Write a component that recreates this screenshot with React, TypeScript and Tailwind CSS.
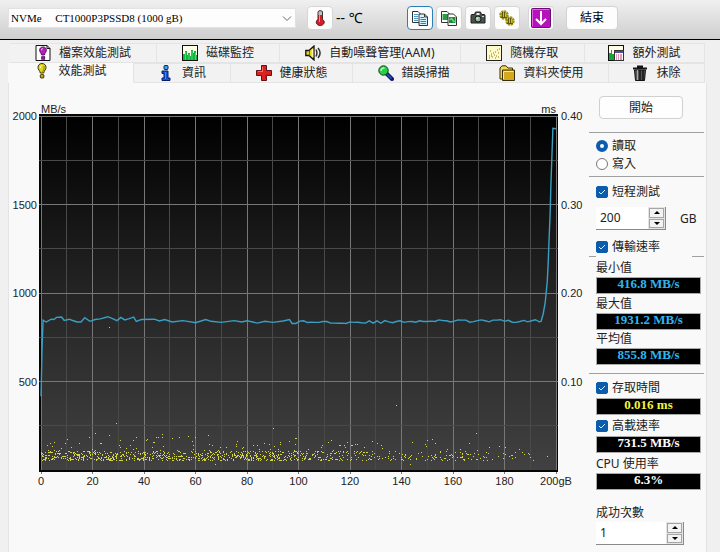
import { useState, type ReactNode } from 'react';

type TabItem = {
  label: string;
  icon: ReactNode;
  size: string;
};

type Point = [number, number];

function Icon({ children }: { children: ReactNode }) {
  return (
    <svg viewBox="0 0 16 16" className="h-4 w-4 shrink-0" aria-hidden="true">
      {children}
    </svg>
  );
}

const bulbShape = 'M8 .5C5.300 .5 4 2.300 4 4.500C4 6.500 5.800 7.500 6.300 10H9.700C10.200 7.500 12 6.500 12 4.500C12 2.300 10.700 .5 8 .5Z';

const icons = {
  fileBench: (
    <Icon>
      <path d="M1 .5H12L15 3.500V15.500H1Z" fill="#fff" stroke="#111" />
      <path d="M12 .5V3.500H15" fill="none" stroke="#111" />
      <g transform="translate(1.200 1.500) scale(.85)">
        <path d={bulbShape} fill="#b51bbd" stroke="#4d0752" />
        <path d="M6.500 4.500V3L7.500 2" fill="none" stroke="#fff" />
        <rect x="6.500" y="12" width="3.500" height="3" fill="#a316ad" stroke="#4d0752" />
      </g>
    </Icon>
  ),
  monitor: (
    <Icon>
      <rect x=".5" y=".5" width="15" height="15" fill="#fffee8" stroke="#111" />
      <path d="M1 15V9H3V6H5V10H6V8H8V11H9V5H11V8H12V6H14V10H15V15Z" fill="#12b53f" />
      <path d="M3.500 7V15M7 9V15M10 6V15M13.500 8V15" stroke="#40dd69" />
    </Icon>
  ),
  speaker: (
    <Icon>
      <path d="M.8 5.500H4L9 1V15L4 10.500H.8Z" fill="#e3d32b" stroke="#111" strokeWidth="1.300" />
      <path d="M4.500 5.500V10.500" stroke="#6d610b" />
      <path d="M7.500 4V12" stroke="#fff899" strokeWidth="1.500" />
      <path d="M11 4.500C12.300 7 12.300 9 11 11.500M13 3C15.500 6 15.500 10 13 13" fill="none" stroke="#333" strokeWidth="1.500" />
    </Icon>
  ),
  random: (
    <Icon>
      <rect x=".5" y=".5" width="15" height="15" fill="#fffbc8" stroke="#222" />
      <path
        d="M3 11h1M5 9h1M6 12h1M8 10h1M9 7h1M11 5h1M12 8h1M10 11h1M4 6h1M3 13h1M12 12h1M7 8h1M13 4h1M9 13h1M5 11h1"
        stroke="#927725"
      />
    </Icon>
  ),
  extra: (
    <Icon>
      <rect x=".5" y=".5" width="15" height="15" fill="#fffde8" stroke="#111" />
      <path d="M1 15V8H3V5H4V9H6V15Z" fill="#12a63c" />
      <rect x="6.500" y="5.500" width="9" height="10" fill="#fff" stroke="#333" />
      <path d="M7 7H15" stroke="#5b4aa0" strokeWidth="2" />
      <path d="M8 10h1M10 10h1M12 10h2M8 12h1M10 12h1M12 12h2M8 14h1M10 14h1M12 14h2" stroke="#b83478" />
    </Icon>
  ),
  bulb: (
    <Icon>
      <path d={bulbShape} fill="#e2d81b" stroke="#38360a" />
      <path d="M6.500 5V3.500L7.500 2.500" fill="none" stroke="#fff" />
      <path d="M10 3V6L8.500 9" fill="none" stroke="#928a0b" />
      <rect x="6.300" y="11.500" width="3.600" height="3.500" rx="1" fill="#b9ad15" stroke="#38360a" />
    </Icon>
  ),
  info: (
    <Icon>
      <rect x="6" y=".5" width="4" height="4" rx="1" fill="#39a5ed" stroke="#092054" />
      <path d="M4 6H10V13H12V15.500H4V13H6V8.500H4Z" fill="#1554d4" stroke="#081d65" />
      <path d="M7.500 7V14" stroke="#4386f4" />
    </Icon>
  ),
  health: (
    <Icon>
      <path d="M5.500 .5H10.500V5.500H15.500V10.500H10.500V15.500H5.500V10.500H.5V5.500H5.500Z" fill="#df2020" stroke="#611212" />
      <path d="M6.500 6V2M2 6.500H7" stroke="#f66c61" />
      <path d="M10 14V10H14.500" fill="none" stroke="#9f1515" />
    </Icon>
  ),
  search: (
    <Icon>
      <path d="M8 8L14 14" stroke="#101a68" strokeWidth="4" strokeLinecap="round" />
      <path d="M9 9L13.500 13.500" stroke="#2955d0" strokeWidth="1.500" />
      <circle cx="5.500" cy="5.500" r="4.700" fill="#25d044" stroke="#123d1c" />
      <path d="M3 6C3 3.500 4.500 3 6.500 2.800" fill="none" stroke="#b9ffb5" strokeWidth="1.500" />
    </Icon>
  ),
  folder: (
    <Icon>
      <path d="M1 3L3 .8H7L9 3H13.500V14H1Z" fill="#f4d75b" stroke="#373009" />
      <path d="M3.500 5H15.500V15.500H3.500Z" fill="#d4a91c" stroke="#373009" />
      <path d="M4.500 6.500H14.500M4.500 7V14" stroke="#ffea85" />
    </Icon>
  ),
  trash: (
    <Icon>
      <path d="M5 1.500H11M1 3.500H15" stroke="#151515" strokeWidth="2" />
      <path d="M2.500 5H13.500L12.500 15.500H3.500Z" fill="#555" stroke="#111" />
      <path d="M5.500 5V15" stroke="#aaa" />
      <path d="M8 5V15M11 5V15" stroke="#151515" strokeWidth="1.500" />
    </Icon>
  ),
  thermometer: (
    <Icon>
      <path d="M6 2C6 .2 10.500 .2 10.500 2V9.500C13.500 11 12.500 15.500 8.200 15.500C4 15.500 3 11 6 9.500Z" fill="#d51f27" stroke="#52262a" />
      <path d="M6.500 2.500C6.500 .8 10 .8 10 2.500V5H6.500Z" fill="#9fcfd8" />
      <path d="M7.500 4V12" stroke="#ff8f8b" />
    </Icon>
  ),
  copyText: (
    <Icon>
      <path d="M.5 1.500H6L8.500 4V12.500H.5Z" fill="#fff" stroke="#333" />
      <path d="M2 4.500H6M2 6.500H6M2 8.500H6M2 10.500H6" stroke="#4b9bca" />
      <path d="M7 4H12.500L15.500 7V15.500H7Z" fill="#d8f1ff" stroke="#333" />
      <path d="M8.500 7.500H12M8.500 9.500H14M8.500 11.500H14M8.500 13.500H14" stroke="#2582be" />
      <path d="M12.500 4V7H15.500" fill="none" stroke="#333" />
    </Icon>
  ),
  copyImage: (
    <Icon>
      <path d="M.5 1.500H6L8.500 4V12.500H.5Z" fill="#fff" stroke="#333" />
      <rect x="1.500" y="4" width="5.500" height="6" fill="#2b9b48" />
      <path d="M7 4H12.500L15.500 7V15.500H7Z" fill="#fff" stroke="#333" />
      <rect x="8" y="7" width="6.500" height="6" fill="#198c3e" />
      <path d="M8.500 10L10.500 8.500L13.500 12" fill="none" stroke="#75dc70" strokeWidth="1.500" />
    </Icon>
  ),
  camera: (
    <Icon>
      <path d="M1 5.500Q1 4.500 2 4.500H4.500L5.500 2H10.500L11.500 4.500H14Q15 4.500 15 5.500V13H1Z" fill="#4a504b" stroke="#1d211e" />
      <rect x="6.500" y="3" width="3" height="2" fill="#eee" />
      <circle cx="8" cy="9" r="3" fill="#89b49a" stroke="#161a17" />
      <circle cx="7.300" cy="8.300" r="1" fill="#ddf5e4" />
      <path d="M12 6.500H14" stroke="#ddd" />
    </Icon>
  ),
  gears: (
    <Icon>
      <circle cx="5" cy="5" r="3.500" fill="#d2c528" stroke="#9b8e12" strokeWidth="2.500" strokeDasharray="2 .7" />
      <path d="M3.500 2V7M5.500 2V7M2 7.500H8" stroke="#5f570b" />
      <circle cx="11" cy="11" r="3.500" fill="#d2c528" stroke="#9b8e12" strokeWidth="2.500" strokeDasharray="2 .7" />
      <path d="M9.500 8V13M11.500 8V13M8 13.500H14" stroke="#5f570b" />
    </Icon>
  )
};

const upperTabs: TabItem[] = [
  { label: '檔案效能測試', icon: icons.fileBench, size: 'flex-[147]' },
  { label: '磁碟監控', icon: icons.monitor, size: 'flex-[123]' },
  { label: '自動噪聲管理(AAM)', icon: icons.speaker, size: 'flex-[181]' },
  { label: '隨機存取', icon: icons.random, size: 'flex-[124]' },
  { label: '額外測試', icon: icons.extra, size: 'flex-[120]' }
];

const lowerTabs: TabItem[] = [
  { label: '效能測試', icon: icons.bulb, size: 'flex-[126]' },
  { label: '資訊', icon: icons.info, size: 'flex-[97]' },
  { label: '健康狀態', icon: icons.health, size: 'flex-[122]' },
  { label: '錯誤掃描', icon: icons.search, size: 'flex-[122]' },
  { label: '資料夾使用', icon: icons.folder, size: 'flex-[134]' },
  { label: '抹除', icon: icons.trash, size: 'flex-[96]' }
];

// Plot area inside the chart's own coordinate system
const LEFT = 32;
const TOP = 20;
const WIDTH = 515;
const HEIGHT = 354;

// [position in gB, MB/s]
const transferStart: Point[] = [
  [0, 417], [0.4, 680], [0.8, 846], [2, 836], [4, 852], [5, 850], [6, 862], [8, 864], [9, 845],
  [11, 852], [12, 846], [14, 836], [15.5, 836], [17, 860], [19, 840], [21, 850], [23, 854], [26, 866],
  [28, 854], [29.5, 844], [31, 862], [32.5, 848], [34, 854], [36, 864], [37, 840], [39, 850], [44, 852],
  [46, 842], [48, 850], [51, 836], [55, 844], [57, 840], [60, 832], [64, 850], [66, 840], [70, 834],
  [75, 844], [78, 836], [80, 843], [84, 830], [87, 840], [90, 834], [94, 842], [96.5, 850], [97.5, 828]
];

const transferEnd: Point[] = [
  [194.2, 840], [195, 880], [195.8, 945], [196.6, 1065], [197, 1180], [197.3, 1300], [197.7, 1440],
  [198, 1600], [198.4, 1770], [198.8, 1931], [200, 1928]
];

const spikes: Point[] = [
  [68, 211], [75, 307], [13, 326], [26, 323], [60, 327], [79, 324], [106, 323], [121, 321], [138, 321],
  [147, 320], [196, 325], [232, 312], [255, 322], [281, 329], [355, 289], [384, 328], [394, 327],
  [428, 327], [436, 334], [448, 331], [458, 330], [464, 338], [470, 339], [481, 336], [489, 341],
  [492, 344], [506, 340], [174, 348], [369, 348]
];

function createRandom(seed: number) {
  let value = seed;
  return () => {
    value = (value * 16807) % 2147483647;
    return value / 2147483647;
  };
}

function buildTransfer() {
  const random = createRandom(29);
  const middle: Point[] = [];
  for (let gb = 99; gb < 194; gb += 1.5) {
    const base = gb < 140 ? 836 : 841;
    middle.push([gb, base + Math.round((random() - 0.5) * 16)]);
  }
  return [...transferStart, ...middle, ...transferEnd]
    .map(([gb, speed]) => `${LEFT + (gb / 200) * WIDTH},${TOP + HEIGHT - (speed / 2000) * HEIGHT}`)
    .join(' ');
}

function buildAccess() {
  const random = createRandom(7121);
  const points: Point[] = [...spikes];
  const bands = [
    { from: 0, to: 258, count: 760 },
    { from: 258, to: 340, count: 150 },
    { from: 340, to: 450, count: 110 },
    { from: 450, to: 490, count: 14 }
  ];
  bands.forEach(({ from, to, count }) => {
    for (let i = 0; i < count; i++) {
      const x = from + random() * (to - from);
      // most samples sit close to the floor, a few reach higher
      const lift = random() < 0.3 ? random() * random() * 30 : random() * 10;
      points.push([Math.floor(x), Math.floor(345 - lift)]);
    }
  });
  return points.map(([x, y]) => `M${LEFT + x} ${TOP + y}h1v1h-1z`).join('');
}

const transferLine = buildTransfer();
const accessDots = buildAccess();

function BenchmarkChart() {
  const columns = Array.from({ length: 21 }, (_, i) => i);
  const rows = Array.from({ length: 9 }, (_, i) => i);
  const bottom = TOP + HEIGHT;
  return (
    <svg
      viewBox="0 0 580 398"
      shapeRendering="crispEdges"
      className="block w-full fill-[#222] font-['Liberation_Sans',sans-serif] text-[11px]"
      role="img"
      aria-label="MB/s, ms"
    >
      <defs>
        <linearGradient id="plot" x1="0" y1="0" x2="0" y2="1">
          <stop offset="0" stopColor="#000" />
          <stop offset=".5" stopColor="#242424" />
          <stop offset="1" stopColor="#414141" />
        </linearGradient>
      </defs>
      <rect x={LEFT - 2} y={TOP - 2} width={WIDTH + 4} height={HEIGHT + 4} fill="#050505" />
      <rect x={LEFT} y={TOP} width={WIDTH} height={HEIGHT} fill="url(#plot)" />
      {columns.map((i) => {
        const x = Math.floor(LEFT + (i * WIDTH) / 20) + 0.5;
        return (
          <line key={i} x1={x} x2={x} y1={TOP} y2={bottom + (i % 2 ? 2 : 4)} stroke={i % 2 ? '#494949' : '#777'} />
        );
      })}
      {rows.map((i) => {
        const y = Math.floor(TOP + (i * HEIGHT) / 8) + 0.5;
        return (
          <line key={i} x1={LEFT - 2} x2={LEFT + WIDTH + 2} y1={y} y2={y} stroke={i % 2 ? '#494949' : '#777'} />
        );
      })}
      <path d={`M${LEFT - 2} ${bottom + 0.5}H${LEFT + WIDTH + 2}`} stroke="#050505" strokeWidth="2" />
      <path d={accessDots} fill="#d5d73c" />
      <polyline points={transferLine} fill="none" stroke="#399fc4" strokeWidth="1.400" shapeRendering="auto" />
      <text x={LEFT} y="17">MB/s</text>
      <text x={LEFT + WIDTH} y="17" textAnchor="end">ms</text>
      {[2000, 1500, 1000, 500].map((speed, i) => (
        <text key={speed} x={LEFT - 4} y={TOP + 4 + (i * HEIGHT) / 4} textAnchor="end">
          {speed}
        </text>
      ))}
      {['0.40', '0.30', '0.20', '0.10'].map((time, i) => (
        <text key={time} x={LEFT + WIDTH + 5} y={TOP + 4 + (i * HEIGHT) / 4}>
          {time}
        </text>
      ))}
      {Array.from({ length: 11 }, (_, i) => (
        <text key={i} x={LEFT + (i * WIDTH) / 10} y={bottom + 15} textAnchor="middle">
          {i === 10 ? '200gB' : i * 20}
        </text>
      ))}
    </svg>
  );
}

function ToolButton({ label, active, children }: { label: string; active?: boolean; children: ReactNode }) {
  return (
    <button
      type="button"
      aria-label={label}
      className={`flex h-6 w-[26px] shrink-0 items-center justify-center rounded border bg-[#fdfdfd] ${
        active ? 'border-[#2b7fb8]' : 'border-[#d6d6d6]'
      }`}
    >
      {children}
    </button>
  );
}

function Toolbar() {
  return (
    <header className="flex h-10 items-center border-b border-black bg-linear-to-b from-[#f0f0f0] to-[#cecece] pb-1">
      <div className="relative ml-2 w-2/5">
        <select
          aria-label="NVMe"
          className="block h-5 w-full appearance-none border border-[#e2e2e2] bg-[#fdfdfd] pl-[2px] font-['Liberation_Serif',serif] text-[11px] leading-4 text-black"
        >
          <option>{'NVMe\u00a0\u00a0\u00a0\u00a0 CT1000P3PSSD8 (1000 gB)'}</option>
        </select>
        <svg viewBox="0 0 10 6" className="pointer-events-none absolute top-2 right-1 h-[6px] w-[10px]" aria-hidden="true">
          <path d="M1 .5L5 4.500L9 .5" fill="none" stroke="#666" />
        </svg>
      </div>
      <div className="ml-[11px] flex items-center gap-[3px]">
        <ToolButton label="℃">{icons.thermometer}</ToolButton>
        <span className="w-7 text-[14px] whitespace-nowrap text-black">-- ℃</span>
      </div>
      <div className="ml-[43px] flex gap-[3px]">
        <ToolButton label="Text" active>{icons.copyText}</ToolButton>
        <ToolButton label="Image">{icons.copyImage}</ToolButton>
        <ToolButton label="Camera">{icons.camera}</ToolButton>
        <ToolButton label="Options">{icons.gears}</ToolButton>
      </div>
      <div className="ml-2 flex gap-3">
        <ToolButton label="Save">
          <svg viewBox="0 0 20 20" className="h-5 w-5 shrink-0" aria-hidden="true">
            <rect x=".5" y=".5" width="19" height="19" rx="1" fill="#b711bd" stroke="#6e0b74" />
            <path d="M1.500 18V1.500H18" fill="none" stroke="#dd65df" />
            <path d="M10 3V15M5 11L10 16L15 11" fill="none" stroke="#fff" strokeWidth="2" />
          </svg>
        </ToolButton>
        <button type="button" className="h-6 w-[52px] rounded border border-[#d2d2d2] bg-[#fdfdfd] text-[12px] leading-4 text-black">
          結束
        </button>
      </div>
    </header>
  );
}

function TabRow({ tabs, selected, onSelect }: { tabs: TabItem[]; selected: string; onSelect: (label: string) => void }) {
  return (
    <div className="flex">
      {tabs.map((tab) => {
        const active = tab.label === selected;
        return (
          <button
            key={tab.label}
            type="button"
            role="tab"
            aria-selected={active}
            onClick={() => onSelect(tab.label)}
            className={`flex h-5 items-center justify-center gap-2 border-r border-[#e4e4e4] whitespace-nowrap ${tab.size} ${
              active ? 'bg-[#f9f9f9] pb-1' : 'border-t border-b bg-[#f2f2f2]'
            }`}
          >
            {tab.icon}
            {tab.label}
          </button>
        );
      })}
    </div>
  );
}

function Check({ label, className }: { label: string; className: string }) {
  const [checked, setChecked] = useState(true);
  return (
    <label className={`mx-[7px] flex h-[18px] items-center gap-1 ${className}`}>
      <span className="relative flex">
        <input
          type="checkbox"
          checked={checked}
          onChange={(e) => setChecked(e.target.checked)}
          className="h-3 w-3 appearance-none rounded-xs border border-[#0b5cad] bg-white checked:bg-[#0b5cad]"
        />
        <svg viewBox="0 0 12 12" className="pointer-events-none absolute inset-0 h-3 w-3" aria-hidden="true">
          <path d="M3 6L5 8L9 4" fill="none" stroke="#d7ebff" />
        </svg>
      </span>
      {label}
    </label>
  );
}

function Readout({ value, color }: { value: string; color: string }) {
  return (
    <output
      className={`mr-[3px] ml-[7px] block h-[17px] border border-[#aaa] bg-black text-center font-['Liberation_Serif',serif] text-[13px] leading-3 font-bold ${color}`}
    >
      {value}
    </output>
  );
}

function Stepper({ id, label, start, width }: { id: string; label: string; start: number; width: string }) {
  const [value, setValue] = useState(start);
  return (
    <div className={`flex h-[23px] border-r border-b border-[#8a8a8a] bg-white ${width}`}>
      <input
        id={id}
        type="text"
        aria-label={label}
        value={value}
        onChange={(e) => setValue(Number(e.target.value) || 0)}
        className="w-0 flex-1 px-1 text-[12px]"
      />
      <div className="flex w-[17px] flex-col gap-px bg-[#e4e4e4] p-px">
        {[1, -1].map((step) => (
          <button
            key={step}
            type="button"
            aria-label={step > 0 ? '+' : '-'}
            onClick={() => setValue(value + step)}
            className="flex flex-1 items-center justify-center border border-[#a5a5a5] bg-[#f3f3f3]"
          >
            <svg viewBox="0 0 6 3" className="h-[3px] w-[6px]" aria-hidden="true">
              <path d={step > 0 ? 'M0 3L3 0L6 3Z' : 'M0 0L3 3L6 0Z'} fill="#000" />
            </svg>
          </button>
        ))}
      </div>
    </div>
  );
}

function Caption({ children, className = '' }: { children: ReactNode; className?: string }) {
  return <p className={`ml-[7px] h-[18px] ${className}`}>{children}</p>;
}

function Sidebar() {
  const [mode, setMode] = useState('讀取');
  return (
    <aside className="w-[115px] shrink-0 leading-[18px]">
      <button type="button" className="ml-2.5 block h-[23px] w-[84px] rounded border border-[#d0d0d0] bg-[#fefefe]">
        開始
      </button>
      <fieldset className="mt-[13px] border-t border-b border-[#a0a0a0] px-[7px] pt-1 pb-[3px]">
        {['讀取', '寫入'].map((item) => (
          <label key={item} className="flex h-[18px] items-center gap-1">
            <input
              type="radio"
              name="mode"
              checked={mode === item}
              onChange={() => setMode(item)}
              className="h-3 w-3 appearance-none rounded-full border border-[#777] bg-white checked:border-4 checked:border-[#0b5cad]"
            />
            {item}
          </label>
        ))}
      </fieldset>
      <Check label="短程測試" className="mt-[6px]" />
      <div className="mt-[6px] ml-[7px] flex items-center gap-[14px]">
        <Stepper id="short-stroke" label="短程測試" start={200} width="w-[70px]" />
        <label htmlFor="short-stroke">GB</label>
      </div>
      <Check label="傳輸速率" className="mt-2" />
      <div className="flex justify-between">
        <span className="w-[7px] border-t border-[#a0a0a0]" />
        <span className="w-3 border-t border-[#a0a0a0]" />
      </div>
      <Caption className="mt-[2px]">最小值</Caption>
      <Readout value="416.8 MB/s" color="text-[#2fb6ee]" />
      <Caption className="mt-px">最大值</Caption>
      <Readout value="1931.2 MB/s" color="text-[#2fb6ee]" />
      <Caption>平均值</Caption>
      <Readout value="855.8 MB/s" color="text-[#2fb6ee]" />
      <hr className="mt-2 border-[#a0a0a0]" />
      <Check label="存取時間" className="mt-[5px] mb-px" />
      <Readout value="0.016 ms" color="text-[#f4f43c]" />
      <Check label="高載速率" className="mt-[2px] mb-px" />
      <Readout value="731.5 MB/s" color="text-white" />
      <Caption className="mt-[2px]">CPU 使用率</Caption>
      <Readout value="6.3%" color="text-white" />
      <Caption className="mt-[14px]">成功次數</Caption>
      <div className="ml-[7px] flex">
        <Stepper id="passes" label="成功次數" start={1} width="w-[88px]" />
      </div>
    </aside>
  );
}

export default function App() {
  const [tab, setTab] = useState('效能測試');
  return (
    <div className="flex min-h-screen flex-col bg-[#f0f0f0] font-['Noto_Sans','Noto_Sans_CJK_TC',sans-serif] text-[12px] leading-4 text-[#222]">
      <Toolbar />
      <main className="flex flex-1 flex-col pt-[3px] pr-[13px] pl-2">
        <div role="tablist" className="pr-[2px]">
          <div className="pl-[2px]">
            <TabRow tabs={upperTabs} selected={tab} onSelect={setTab} />
          </div>
          <TabRow tabs={lowerTabs} selected={tab} onSelect={setTab} />
        </div>
        <section className="flex flex-1 items-start border-r border-l border-[#e4e4e4] bg-[#f9f9f9] pt-[13px] pr-[2px]">
          <div className="min-w-0 flex-1">
            <BenchmarkChart />
          </div>
          <Sidebar />
        </section>
      </main>
    </div>
  );
}
